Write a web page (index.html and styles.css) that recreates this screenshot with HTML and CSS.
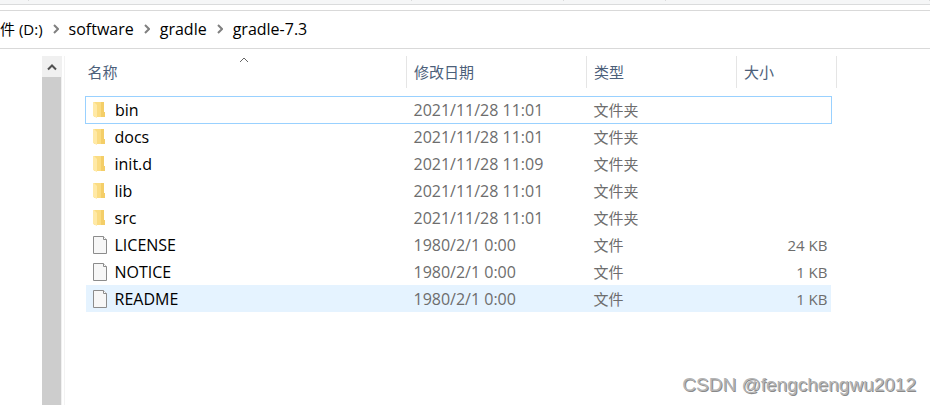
FILE: index.html
```
<!DOCTYPE html>
<html lang="zh-CN">
<head>
    <meta charset="UTF-8">
    <meta name="viewport" content="width=device-width, initial-scale=1.0">
    <title>gradle-7.3</title>
    <link rel="stylesheet" href="styles.css">
</head>
<body>
    <svg class="sprite" aria-hidden="true">
        <symbol id="folder" viewBox="0 0 14 18">
            <path d="M2 1h10v10h1v5H2z" fill="#fbdc82"/>
            <path d="M9 1h3v10h1v5H9z" fill="#f4ce68"/>
            <path d="M1 1h1l3 3v13l-4-2z" fill="#ffe9a6"/>
        </symbol>
        <symbol id="file" viewBox="0 0 16 20">
            <path d="M1.500 1.500h10l3 3v14h-13z" fill="#f7f7f7" stroke="#8c8c8c"/>
            <path d="M11.500 1.500v3h3" fill="#fff" stroke="#8c8c8c"/>
        </symbol>
        <symbol id="chevron" viewBox="0 0 6 10">
            <path d="M1 1l4 4-4 4" fill="none" stroke="#808080" stroke-width="2"/>
        </symbol>
    </svg>

    <div class="ribbon">
        <span></span><span></span><span></span><span></span><span></span>
    </div>

    <nav class="address">
        <a href="#">件 (D:)</a>
        <svg class="chevron"><use href="#chevron"/></svg>
        <a href="#">software</a>
        <svg class="chevron"><use href="#chevron"/></svg>
        <a href="#">gradle</a>
        <svg class="chevron"><use href="#chevron"/></svg>
        <a href="#">gradle-7.3</a>
    </nav>

    <main class="explorer">
        <div class="scrollbar">
            <button class="scroll-up" aria-label="向上滚动">
                <svg width="10" height="8" viewBox="0 0 10 8"><path d="M1 6.500l4-4 4 4" fill="none" stroke="#505050" stroke-width="2"/></svg>
            </button>
            <div class="thumb"></div>
        </div>

        <div class="pane">
            <table class="files">
                <colgroup>
                    <col>
                    <col class="col-date">
                    <col class="col-type">
                    <col class="col-size">
                    <col class="col-end">
                </colgroup>
                <thead>
                    <tr>
                        <th class="sorted">
                            <button>名称</button>
                            <svg class="sort" width="10" height="6" viewBox="0 0 10 6"><path d="M1 5l4-4 4 4" fill="none" stroke="#666"/></svg>
                        </th>
                        <th><button>修改日期</button></th>
                        <th><button>类型</button></th>
                        <th colspan="2"><button>大小</button></th>
                    </tr>
                </thead>
                <tbody>
                    <tr class="spacer"><td colspan="5"></td></tr>
                    <tr class="focused">
                        <td><div class="name"><svg class="folder"><use href="#folder"/></svg>bin</div></td>
                        <td class="date">2021/11/28 11:01</td>
                        <td>文件夹</td>
                        <td class="size"></td>
                        <td class="end"></td>
                    </tr>
                    <tr>
                        <td><div class="name"><svg class="folder"><use href="#folder"/></svg>docs</div></td>
                        <td class="date">2021/11/28 11:01</td>
                        <td>文件夹</td>
                        <td class="size"></td>
                        <td class="end"></td>
                    </tr>
                    <tr>
                        <td><div class="name"><svg class="folder"><use href="#folder"/></svg>init.d</div></td>
                        <td class="date">2021/11/28 11:09</td>
                        <td>文件夹</td>
                        <td class="size"></td>
                        <td class="end"></td>
                    </tr>
                    <tr>
                        <td><div class="name"><svg class="folder"><use href="#folder"/></svg>lib</div></td>
                        <td class="date">2021/11/28 11:01</td>
                        <td>文件夹</td>
                        <td class="size"></td>
                        <td class="end"></td>
                    </tr>
                    <tr>
                        <td><div class="name"><svg class="folder"><use href="#folder"/></svg>src</div></td>
                        <td class="date">2021/11/28 11:01</td>
                        <td>文件夹</td>
                        <td class="size"></td>
                        <td class="end"></td>
                    </tr>
                    <tr>
                        <td><div class="name"><svg class="file"><use href="#file"/></svg>LICENSE</div></td>
                        <td class="date">1980/2/1 0:00</td>
                        <td>文件</td>
                        <td class="size">24 KB</td>
                        <td class="end"></td>
                    </tr>
                    <tr>
                        <td><div class="name"><svg class="file"><use href="#file"/></svg>NOTICE</div></td>
                        <td class="date">1980/2/1 0:00</td>
                        <td>文件</td>
                        <td class="size">1 KB</td>
                        <td class="end"></td>
                    </tr>
                    <tr class="hovered">
                        <td><div class="name"><svg class="file"><use href="#file"/></svg>README</div></td>
                        <td class="date">1980/2/1 0:00</td>
                        <td>文件</td>
                        <td class="size">1 KB</td>
                        <td class="end"></td>
                    </tr>
                </tbody>
            </table>
        </div>
    </main>

    <div class="watermark">CSDN @fengchengwu2012</div>
</body>
</html>
```
FILE: styles.css
```
* {
    box-sizing: border-box;
}

body {
    margin: 0;
    min-height: 100vh;
    display: flex;
    flex-direction: column;
    position: relative;
    background: #fff;
    color: #000;
    font-family: "Open Sans", "Noto Sans CJK SC", sans-serif;
    font-size: 15px;
    line-height: 20px;
}

button {
    border: 0;
    padding: 0;
    background: none;
    color: inherit;
    font: inherit;
}

.sprite {
    display: none;
}

.ribbon {
    display: grid;
    grid-template-columns: 29px 383px 152px 102px 1fr;
    height: 5px;
    background: #f5f6f7;
    border-bottom: 1px solid #dadbdc;
}

.ribbon span {
    height: 1px;
    border-right: 1px solid #dadbdc;
}

.address {
    display: flex;
    align-items: center;
    height: 39px;
    margin-top: 5px;
    padding-bottom: 2px;
    border-top: 1px solid #d9d9d9;
    border-bottom: 1px solid #d9d9d9;
}

.address a {
    color: #000;
    text-decoration: none;
    white-space: nowrap;
}

.address a:not(:first-child) {
    font-size: 16px;
}

.chevron {
    width: 6px;
    height: 10px;
    margin: 0 10px;
}

/* File list */
.explorer {
    flex: 1;
    display: flex;
    padding: 7px 93px 0 42px;
}

.scrollbar {
    display: flex;
    flex-direction: column;
    width: 20px;
    padding-right: 1px;
    background: #f0f0f0;
}

.scroll-up {
    display: flex;
    align-items: center;
    justify-content: center;
    height: 21px;
}

.thumb {
    flex: 1;
    background: #cdcdcd;
}

.pane {
    flex: 1;
    margin-left: 2px;
    padding-left: 20px;
    border-left: 1px solid #f3f3f3;
}

.files {
    width: 100%;
    table-layout: fixed;
    border-collapse: collapse;
}

.col-date {
    width: 180px;
}

.col-type {
    width: 150px;
}

.col-size {
    width: 95px;
}

.col-end {
    width: 5px;
}

.files th {
    position: relative;
    height: 32px;
    padding: 0 0 0 7px;
    border-right: 1px solid #e5e5e5;
    color: #4c607a;
    font-weight: normal;
    text-align: left;
}

.files th.sorted {
    padding-left: 2px;
}

.sort {
    position: absolute;
    top: 1px;
    left: calc(50% - 7px);
}

.files td {
    height: 27px;
    padding: 0 0 0 7px;
    color: #6d6d6d;
    white-space: nowrap;
}

.files .date {
    font-size: 16px;
}

.files .spacer td {
    height: 8px;
}

.files td.size {
    padding: 0 4px 0 0;
    text-align: right;
}

.files td.end {
    padding: 0;
}

.files td:first-child {
    padding-left: 6px;
}

.name {
    display: flex;
    align-items: center;
    color: #000;
    font-size: 16px;
}

.files svg.folder {
    width: 14px;
    height: 18px;
    margin-right: 9px;
}

.files svg.file {
    width: 16px;
    height: 20px;
    margin-right: 7px;
}

.focused td:not(.end) {
    border-top: 1px solid #99d1ff;
    border-bottom: 1px solid #99d1ff;
}

.focused td:first-child {
    border-left: 1px solid #99d1ff;
}

.focused td.size {
    border-right: 1px solid #99d1ff;
}

.hovered td:not(.end) {
    background: #e5f3ff;
}

.watermark {
    position: absolute;
    right: 14px;
    bottom: 8px;
    color: #b4b4b4;
    font-family: "Liberation Sans", sans-serif;
    font-size: 19px;
    line-height: 24px;
    text-shadow: 1px 1px 0 #8a8a8a;
}
```
